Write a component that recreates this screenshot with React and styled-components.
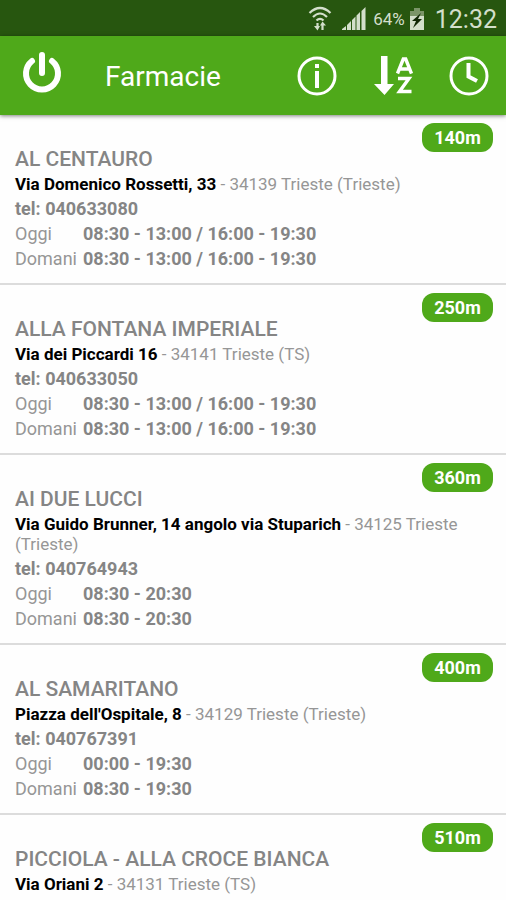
import React from "react"
import styled, { createGlobalStyle } from "styled-components"

const GlobalStyle = createGlobalStyle`
  * {
    box-sizing: border-box;
  }

  body {
    margin: 0;
    background-color: #fefefe;
    font-family: Roboto, "Liberation Sans", sans-serif;
  }
`

const Screen = styled.div`
  display: flex;
  flex-direction: column;
  height: 100vh;
`

const StatusBar = styled.div`
  display: flex;
  flex-shrink: 0;
  align-items: center;
  justify-content: flex-end;
  height: 36px;
  padding: 2px 9px 0 0;
  background-color: #27560f;
  color: #d3dfcb;
`

const Signals = styled.div`
  display: flex;
  align-items: center;
  gap: 10px;
`

const Battery = styled.span`
  margin: 0 4px 0 7px;
  font-size: 17px;
`

const Clock = styled.time`
  margin-left: 10px;
  font-size: 25px;
`

const Toolbar = styled.header`
  position: relative;
  display: flex;
  flex-shrink: 0;
  align-items: center;
  height: 79px;
  padding: 0 17px 0 22px;
  background-color: #4fa91a;
  box-shadow: 0 1px 4px rgba(0, 0, 0, 0.5);
  color: #fff;
`

const Title = styled.h1`
  flex: 1;
  margin: 0 0 0 43px;
  padding-top: 2px;
  font-size: 28px;
  font-weight: 400;
`

const Actions = styled.div`
  display: flex;
  gap: 36px;
`

const IconButton = styled.button`
  display: flex;
  padding: 0;
  border: none;
  background: none;
  color: inherit;
  cursor: pointer;
`

const List = styled.ul`
  flex: 1;
  min-height: 0;
  margin: 0;
  padding: 0;
  overflow-y: auto;
  list-style: none;
  scrollbar-width: none;
`

const Row = styled.li`
  position: relative;
  padding: 32px 15px 12px;
  border-bottom: 2px solid #dcdcdc;
  color: #858585;
`

const Distance = styled.span`
  position: absolute;
  top: 8px;
  right: 13px;
  width: 71px;
  border-radius: 12px;
  background-color: #4fa91a;
  color: #fff;
  font-size: 18px;
  font-weight: 700;
  line-height: 29px;
  text-align: center;
`

const Name = styled.h2`
  margin: 0;
  font-size: 21px;
  font-weight: 500;
  line-height: 24px;
`

const Address = styled.p`
  margin: 3px 0 2px;
  color: #969696;
  font-size: 17px;
  line-height: 20px;
`

const Street = styled.strong`
  color: #000;
  font-weight: 700;
`

const Phone = styled.a`
  display: block;
  color: inherit;
  font-size: 18px;
  font-weight: 700;
  line-height: 25px;
  text-decoration: none;
`

const Hours = styled.dl`
  display: grid;
  grid-template-columns: 68px 1fr;
  margin: 0;
  font-size: 18px;
  line-height: 25px;
`

const Day = styled.dt`
  color: #969696;
  white-space: nowrap;
`

const Time = styled.dd`
  margin: 0;
  font-weight: 700;
`

const WifiIcon = () => (
  <svg width="24" height="26" viewBox="0 0 24 26" fill="none" stroke="currentColor" strokeWidth="2.2">
    <path d="M1.500 7Q12 -3 22.500 7M5 11Q12 4 19 11M8.500 14.500Q12 11 15.500 14.500" />
    <path d="M9.500 17V22M14.500 18V24" />
    <path d="M6 20H12L9.500 24.500ZM12 19.500H18L14.500 15.500Z" fill="currentColor" stroke="none" />
  </svg>
)

const SignalIcon = () => (
  <svg width="24" height="24" viewBox="0 0 24 24" fill="currentColor">
    <path d="M0 23V22L4 19V23ZM5 23V18L9 14V23ZM10 23V13L13.500 9.500V23ZM14.500 23V8.500L18 5V23ZM19.500 23V4L23.500 0V23Z" />
  </svg>
)

const BatteryIcon = () => (
  <svg width="16" height="23" viewBox="0 0 16 23">
    <path d="M5 0H11V3H15V22H1V3H5Z" fill="#7b9568" />
    <path d="M1 8H15V22H1Z" fill="#d3dfcb" />
    <path d="M12 5L3 13H7L4 20L13 11H9Z" fill="#102804" />
  </svg>
)

const PowerIcon = () => (
  <svg width="40" height="50" viewBox="0 0 40 50" fill="none" stroke="currentColor" strokeWidth="6" strokeLinecap="round">
    <path d="M10 10A16 16 0 1 0 30 10M20 4V22" />
  </svg>
)

const InfoIcon = () => (
  <svg width="40" height="40" viewBox="0 0 40 40" fill="none" stroke="currentColor" strokeWidth="3">
    <circle cx="20" cy="20" r="18" />
    <path d="M20 8V12M20 15V32" strokeWidth="4" />
  </svg>
)

const SortIcon = () => (
  <svg width="40" height="40" viewBox="0 0 40 40" fill="none" stroke="currentColor" strokeWidth="3.4">
    <path d="M8 0H14.500V28H21L11.500 39L1 28H8Z" fill="currentColor" stroke="none" />
    <path d="M24.500 17.500L30.300 3H32.700L38.500 17.500M26.500 13H36.500" />
    <path d="M25 22.500H36L26.500 35.500H38.500" />
  </svg>
)

const ClockIcon = () => (
  <svg width="40" height="40" viewBox="0 0 40 40" fill="none" stroke="currentColor" strokeWidth="3">
    <circle cx="20" cy="20" r="18" />
    <path d="M19.500 7V20.500L28 25" strokeWidth="4" />
  </svg>
)

const pharmacies = [
  {
    name: "AL CENTAURO",
    street: "Via Domenico Rossetti, 33",
    city: "34139 Trieste (Trieste)",
    phone: "040633080",
    distance: "140m",
    today: "08:30 - 13:00 / 16:00 - 19:30",
    tomorrow: "08:30 - 13:00 / 16:00 - 19:30",
  },
  {
    name: "ALLA FONTANA IMPERIALE",
    street: "Via dei Piccardi 16",
    city: "34141 Trieste (TS)",
    phone: "040633050",
    distance: "250m",
    today: "08:30 - 13:00 / 16:00 - 19:30",
    tomorrow: "08:30 - 13:00 / 16:00 - 19:30",
  },
  {
    name: "AI DUE LUCCI",
    street: "Via Guido Brunner, 14 angolo via Stuparich",
    city: "34125 Trieste (Trieste)",
    phone: "040764943",
    distance: "360m",
    today: "08:30 - 20:30",
    tomorrow: "08:30 - 20:30",
  },
  {
    name: "AL SAMARITANO",
    street: "Piazza dell'Ospitale, 8",
    city: "34129 Trieste (Trieste)",
    phone: "040767391",
    distance: "400m",
    today: "00:00 - 19:30",
    tomorrow: "08:30 - 19:30",
  },
  {
    name: "PICCIOLA - ALLA CROCE BIANCA",
    street: "Via Oriani 2",
    city: "34131 Trieste (TS)",
    distance: "510m",
  },
]

const Pharmacy = ({ pharmacy }) => {
  const { name, street, city, phone, distance, today, tomorrow } = pharmacy

  return (
    <Row>
      <Distance>{distance}</Distance>
      <Name>{name}</Name>
      <Address>
        <Street>{street}</Street> - {city}
      </Address>
      {phone && <Phone href={`tel:${phone}`}>tel: {phone}</Phone>}
      {today && (
        <Hours>
          <Day>Oggi</Day>
          <Time>{today}</Time>
          <Day>Domani</Day>
          <Time>{tomorrow}</Time>
        </Hours>
      )}
    </Row>
  )
}

const App = () => {
  return (
    <Screen>
      <GlobalStyle />
      <StatusBar>
        <Signals>
          <WifiIcon />
          <SignalIcon />
        </Signals>
        <Battery>64%</Battery>
        <BatteryIcon />
        <Clock>12:32</Clock>
      </StatusBar>
      <Toolbar>
        <IconButton aria-label="Esci">
          <PowerIcon />
        </IconButton>
        <Title>Farmacie</Title>
        <Actions>
          <IconButton aria-label="Informazioni">
            <InfoIcon />
          </IconButton>
          <IconButton aria-label="Ordina">
            <SortIcon />
          </IconButton>
          <IconButton aria-label="Orari">
            <ClockIcon />
          </IconButton>
        </Actions>
      </Toolbar>
      <List>
        {pharmacies.map((pharmacy) => (
          <Pharmacy key={pharmacy.name} pharmacy={pharmacy} />
        ))}
      </List>
    </Screen>
  )
}

export default App
